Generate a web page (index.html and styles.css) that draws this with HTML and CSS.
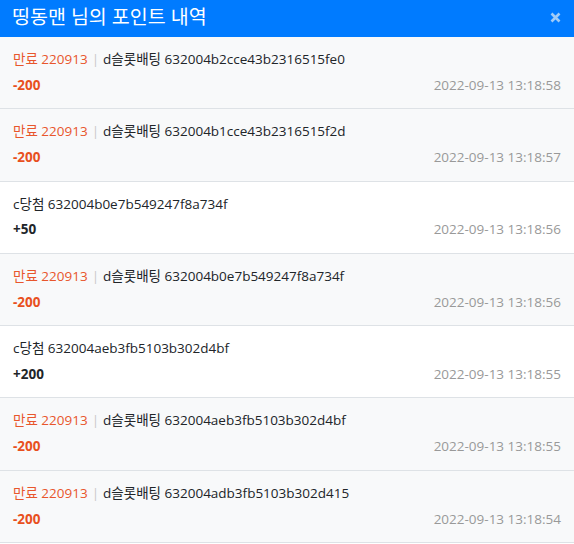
FILE: index.html
```html
<!DOCTYPE html>
<html lang="ko">
<head>
<meta charset="utf-8">
<link rel="stylesheet" href="styles.css">
</head>
<body>
<div class="modal">
  <div class="header">
    <h1 class="title">띵동맨 님의 포인트 내역</h1>
    <span class="close">
      <svg width="11" height="11" viewBox="0 0 11 11"><path d="M1.5 1.5L9.5 9.5M9.5 1.5L1.5 9.5" stroke="currentColor" stroke-width="2.6" stroke-linecap="butt"/></svg>
    </span>
  </div>
  <ul class="list">
    <li class="row expired">
      <div class="desc"><span class="exp">만료 220913</span><span class="sep">|</span>d슬롯배팅 632004b2cce43b2316515fe0</div>
      <div class="meta"><span class="amt minus">-200</span><span class="date">2022-09-13 13:18:58</span></div>
    </li>
    <li class="row expired">
      <div class="desc"><span class="exp">만료 220913</span><span class="sep">|</span>d슬롯배팅 632004b1cce43b2316515f2d</div>
      <div class="meta"><span class="amt minus">-200</span><span class="date">2022-09-13 13:18:57</span></div>
    </li>
    <li class="row">
      <div class="desc">c당첨 632004b0e7b549247f8a734f</div>
      <div class="meta"><span class="amt">+50</span><span class="date">2022-09-13 13:18:56</span></div>
    </li>
    <li class="row expired">
      <div class="desc"><span class="exp">만료 220913</span><span class="sep">|</span>d슬롯배팅 632004b0e7b549247f8a734f</div>
      <div class="meta"><span class="amt minus">-200</span><span class="date">2022-09-13 13:18:56</span></div>
    </li>
    <li class="row">
      <div class="desc">c당첨 632004aeb3fb5103b302d4bf</div>
      <div class="meta"><span class="amt">+200</span><span class="date">2022-09-13 13:18:55</span></div>
    </li>
    <li class="row expired">
      <div class="desc"><span class="exp">만료 220913</span><span class="sep">|</span>d슬롯배팅 632004aeb3fb5103b302d4bf</div>
      <div class="meta"><span class="amt minus">-200</span><span class="date">2022-09-13 13:18:55</span></div>
    </li>
    <li class="row expired">
      <div class="desc"><span class="exp">만료 220913</span><span class="sep">|</span>d슬롯배팅 632004adb3fb5103b302d415</div>
      <div class="meta"><span class="amt minus">-200</span><span class="date">2022-09-13 13:18:54</span></div>
    </li>
  </ul>
</div>
</body>
</html>
```

FILE: styles.css
```css
html, body {
  margin: 0;
  padding: 0;
  background: #fff;
}
body {
  font-family: "Open Sans", "Noto Sans CJK KR", sans-serif;
  color: #212529;
  font-size: 13.5px;
}
.modal {
  width: 574px;
}
.header {
  background: #007bff;
  height: 37px;
  display: flex;
  align-items: center;
  justify-content: space-between;
  padding: 0 12px 0 12px;
  box-sizing: border-box;
}
.title {
  margin: 0;
  color: #fff;
  font-size: 19.5px;
  font-weight: 400;
  line-height: 37px;
  margin-top: -5px;
}
.close {
  color: #9fcbf7;
  display: flex;
  margin-top: -3px;
  margin-right: 1px;
}
.list {
  list-style: none;
  margin: 0;
  padding: 0;
}
.row {
  padding: 13px 13px 13px 13px;
  border-bottom: 1px solid #dee2e6;
  background: #fff;
}
.row.expired {
  background: #f8f9fa;
}
.desc {
  line-height: 19.5px;
  height: 19.5px;
  color: #212529;
}
.exp {
  color: #e8562c;
}
.sep {
  color: #c8c8c8;
  margin: 0 4px;
}
.meta {
  margin-top: 6.3px;
  display: flex;
  justify-content: space-between;
  align-items: center;
  line-height: 19.5px;
  height: 19.5px;
}
.amt {
  font-weight: 700;
  color: #212529;
}
.amt.minus {
  color: #e8501e;
}
.date {
  color: #999;
}
```
